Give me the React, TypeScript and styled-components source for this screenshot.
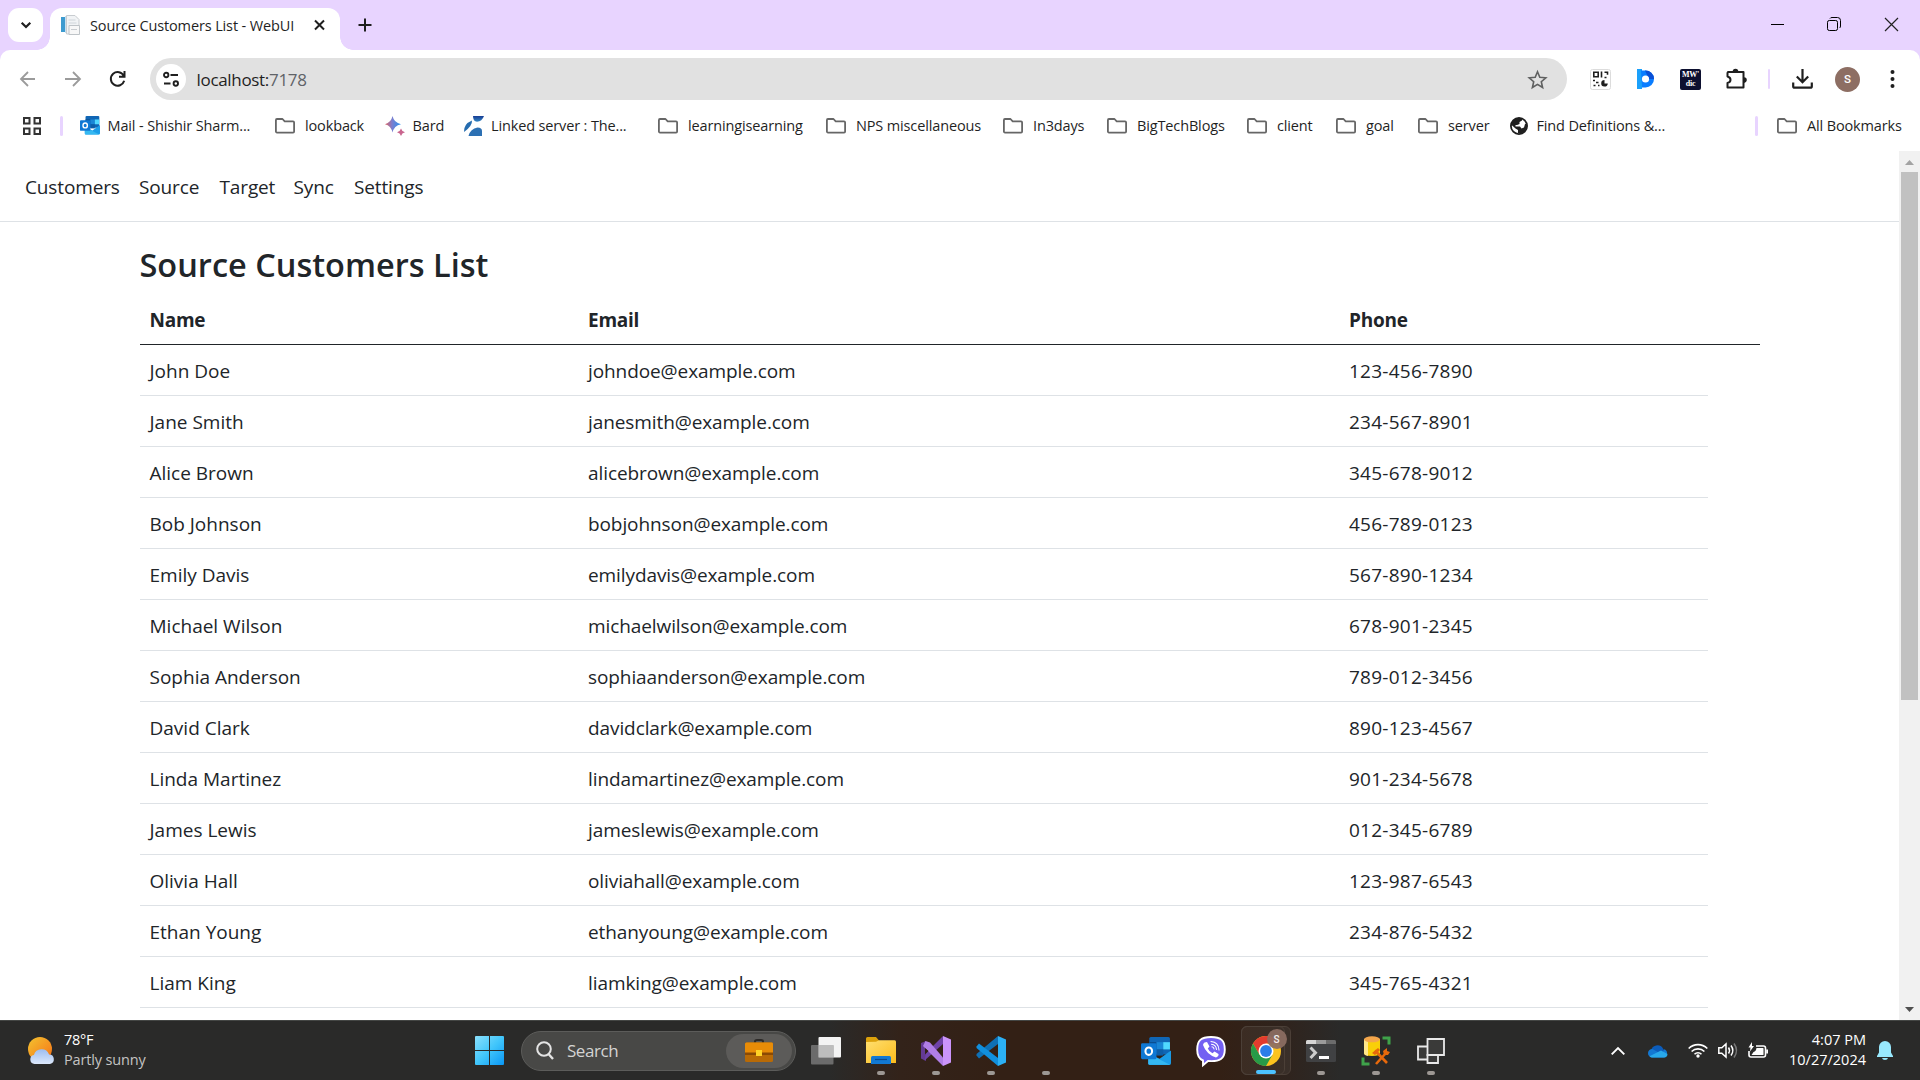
import React from "react";
import styled, { createGlobalStyle, css } from "styled-components";

const GlobalStyle = createGlobalStyle`
  *, *::before, *::after { box-sizing: border-box; }
  html, body { margin: 0; padding: 0; }
  body {
    width: 1920px; height: 1080px; overflow: hidden; background: #fff;
    font-family: "Open Sans", "Noto Sans", sans-serif; color: #212529;
  }
  svg { display: block; flex: none; overflow: visible; }
`;

/* ---------- window frame ---------- */
const Screen = styled.div`
  width: 1920px; height: 1080px; display: flex; flex-direction: column; overflow: hidden;
`;
const TabStrip = styled.div`
  height: 50px; flex: none; background: #e8d4ff; display: flex; align-items: flex-start; padding: 8px 0 0 8px;
`;
const TabSearch = styled.div`
  width: 35px; height: 34px; border-radius: 11px; background: #fff;
  display: flex; align-items: center; justify-content: center;
`;
const Tab = styled.div`
  position: relative; margin-left: 7px; width: 290px; height: 42px; background: #fff;
  border-radius: 12px 12px 0 0; display: flex; align-items: center; padding: 0 13px 8px 10px;
  &::before, &::after {
    content: ""; position: absolute; bottom: 0; width: 13px; height: 13px;
  }
  &::before { left: -13px; background: radial-gradient(circle at 0 0, transparent 12.5px, #fff 13px); }
  &::after { right: -13px; background: radial-gradient(circle at 100% 0, transparent 12.5px, #fff 13px); }
`;
const TabTitle = styled.span`
  margin-left: 10px; flex: 1; font-size: 14.5px; letter-spacing: -0.13px; white-space: nowrap; color: #1f1f1f;
`;
const NewTab = styled.div`
  margin: 10px 0 0 18px; width: 14px;
`;
const WindowButtons = styled.div`
  margin-left: auto; display: flex; padding-top: 9px; height: 34px;
`;
const WindowButton = styled.div<{ $w: number }>`
  width: ${(p) => p.$w}px; display: flex; justify-content: center;
`;
const ToolbarBack = styled.div`
  background: #e8d4ff; flex: none;
`;
const Toolbar = styled.div`
  height: 58px; background: #fff; border-radius: 10px 10px 0 0; display: flex; align-items: center; padding: 0 21px 0 20px;
`;
const NavIcon = styled.div<{ $w: number }>`
  width: ${(p) => p.$w}px; display: flex; align-items: center;
`;
const AddressBar = styled.div`
  width: 1417px; height: 42px; border-radius: 21px; background: #e1e1e1;
  display: flex; align-items: center; padding: 0 20px 0 6px;
`;
const SiteInfo = styled.div`
  width: 30px; height: 30px; border-radius: 50%; background: #fff; display: flex; align-items: center; justify-content: center;
`;
const Url = styled.span`
  margin-left: 10.5px; flex: 1; font-size: 17px; letter-spacing: -0.32px; color: #1f1f1f;
  b { font-weight: 400; color: #5f6368; }
`;
const Extensions = styled.div`
  flex: 1; display: flex; align-items: center; height: 42px; padding-left: 23px;
`;
const Slot = styled.div<{ $w: number }>`
  width: ${(p) => p.$w}px; flex: none; display: flex; align-items: center;
`;
const Dictionary = styled.div`
  width: 21px; height: 21px; border-radius: 2px; background: #0d1030; color: #fff;
  font: 700 8px/9px "Liberation Serif", serif; letter-spacing: -0.3px; text-align: center; padding-top: 1.5px;
`;
const Avatar = styled.div<{ $size: number }>`
  width: ${(p) => p.$size}px; height: ${(p) => p.$size}px; border-radius: 50%; background: #8d6e63; color: #fff;
  font: 500 ${(p) => (p.$size > 22 ? 11.5 : 10)}px Roboto, sans-serif; display: flex; align-items: center; justify-content: center;
`;

/* ---------- bookmarks ---------- */
const BookmarkBar = styled.div`
  height: 43px; flex: none; background: #fff; display: flex; align-items: center; padding: 0 0 8px 23px;
`;
const Divider = styled.div<{ $w?: number }>`
  width: ${(p) => p.$w ?? 3}px; height: 20px; border-radius: 2px; background: #e8d4ff;
`;
const Bookmark = styled.div<{ $w: number; $gap: number }>`
  width: ${(p) => p.$w}px; flex: none; display: flex; align-items: center; gap: ${(p) => p.$gap}px;
  white-space: nowrap; font-size: 14.5px; letter-spacing: -0.14px; color: #1f1f1f;
`;

/* ---------- page ---------- */
const Viewport = styled.div`
  height: 869px; flex: none; display: flex; overflow: hidden;
`;
const Page = styled.main`
  width: 1899px; height: 869px; overflow: hidden; background: #fff;
`;
const SiteNav = styled.nav`
  height: 71px; border-bottom: 1px solid #dee2e6; display: flex; align-items: center; padding: 1px 0 0 25px;
  font-size: 19px; letter-spacing: -0.13px; color: #212529;
`;
const NavLink = styled.a<{ $w: number }>`
  width: ${(p) => p.$w}px; white-space: nowrap;
`;
const Container = styled.div`
  padding: 20px 0 0 140px;
`;
const Title = styled.h1`
  margin: 0 0 0 -0.5px; height: 52px; font-size: 32.5px; line-height: 45px; font-weight: 600; letter-spacing: 0; color: #212529;
`;
const Table = styled.table`
  width: 1620px; table-layout: fixed; border-collapse: separate; border-spacing: 0; font-size: 19px; letter-spacing: -0.09px;
  th, td { height: 51px; padding: 1.5px 10px 0; text-align: left; vertical-align: middle; line-height: 30px; border-bottom: 1px solid #dee2e6; }
  th { border-bottom-color: #212529; font-weight: 700; letter-spacing: -0.25px; }
  th:first-child, td:first-child { padding-left: 9.5px; }
  td:first-child { letter-spacing: 0; }
`;
const PhoneCell = styled.td`
  letter-spacing: 0.26px;
`;
const ScrollTrack = styled.div`
  width: 21px; background: #f1f1f1; display: flex; flex-direction: column; align-items: center; padding: 9px 0 8px;
`;
const ScrollThumb = styled.div`
  margin: 7px 0 auto; width: 17px; height: 528px; background: #c1c1c1;
`;

/* ---------- taskbar ---------- */
const Taskbar = styled.footer`
  height: 60px; flex: none; display: flex; align-items: center; border-top: 1px solid #444644; color: #fff;
  background: linear-gradient(90deg, #2a2a29 0, #2a2a29 830px, #33231a 900px, #332015 1000px, #332015 1220px, #2f241e 1290px, #2a2a29 1340px);
`;
const Weather = styled.div`
  width: 462px; padding-left: 28px; display: flex; align-items: center; gap: 9px;
`;
const Lines = styled.div<{ $right?: boolean }>`
  font-size: 14.5px; line-height: 20px; letter-spacing: -0.25px; white-space: nowrap; padding-bottom: 2px;
  ${(p) => p.$right && css`text-align: right; width: 98px; margin-right: 11px; flex: none; letter-spacing: 0;`}
  span { display: block; }
`;
const Muted = styled.span`
  color: #c4c4c3; letter-spacing: -0.15px;
`;
const SearchBox = styled.div`
  margin: 0 2.5px 0 4px; width: 275px; height: 40px; border-radius: 20px; background: #484846; border: 1px solid #5c5c5a;
  display: flex; align-items: center; padding: 0 3px 0 14px; font-size: 17px; letter-spacing: -0.45px; color: #d4d4d3;
  svg + span { margin-left: 13px; flex: 1; }
`;
const SearchHighlight = styled.div`
  width: 66px; height: 34px; border-radius: 17px; background: #5c5b59; display: flex; align-items: center; justify-content: center;
`;
const AppCell = styled.div<{ $active?: boolean }>`
  position: relative; width: 55px; height: 49px; flex: none; display: flex; align-items: center; justify-content: center;
  ${(p) => p.$active && css`
    &::before, &::after { content: ""; position: absolute; top: 0; left: 2px; width: 50px; height: 49px; border-radius: 6px; border: 1px solid #4b3f37; background: #ffffff0d; }
    &::after { width: 44px; background: none; }
  `}
`;
const Running = styled.i<{ $active?: boolean }>`
  position: absolute; z-index: 1; bottom: ${(p) => (p.$active ? 1 : 0)}px; left: 50%; transform: translateX(-50%);
  width: ${(p) => (p.$active ? 20 : 8)}px; height: 4px; border-radius: 2px; background: ${(p) => (p.$active ? "#4cc2ff" : "#9d9894")};
`;
const IconLayer = styled.div`
  position: relative; z-index: 1;
`;
const Badge = styled.div`
  position: absolute; z-index: 2; top: 3px; left: 28px; opacity: 0.92;
`;
const Tray = styled.div`
  display: flex; align-items: center; margin-left: 152.5px;
`;

/* ---------- icons ---------- */
const ink = "#1f1f1f";

const Folder = () => (
  <svg width="20" height="16" viewBox="0 0 20 16" fill="none" stroke="#666" strokeWidth="1.8" strokeLinejoin="round">
    <path d="M2 1h5.5l2.2 2.3H18a1.1 1.1 0 0 1 1.1 1.1v9a1.2 1.2 0 0 1-1.1 1.2H2A1.1 1.1 0 0 1 .9 13.400V2.200A1.2 1.2 0 0 1 2 1Z" />
  </svg>
);
const OutlookIcon = ({ size }: { size: number }) => (
  <svg width={size} height={size * 0.93} viewBox="0 0 29 27">
    <rect x="8" y="0" width="20" height="17" rx="1.500" fill="#1066b5" />
    <path d="M8 5h7v7H8z" fill="#0a4a8a" />
    <path d="M15 5h6.500v7H15z" fill="#1a86d6" />
    <path d="M21.500 5H28v7h-6.500z" fill="#50d9ff" />
    <path d="M15 12h6.500v6H15z" fill="#0c5da8" />
    <path d="M7 16l11 5 11-8v12.500a1.500 1.500 0 0 1-1.500 1.500h-19A1.500 1.500 0 0 1 7 25.500Z" fill="#1b9de8" />
    <path d="M7 16l21 10.800H8.500A1.500 1.500 0 0 1 7 25.300Z" fill="#35b8f1" />
    <rect x="0" y="6" width="15" height="15.500" rx="1.300" fill="#0f78d4" />
    <ellipse cx="7.500" cy="13.700" rx="3.200" ry="3.600" fill="none" stroke="#fff" strokeWidth="2" />
  </svg>
);
const BardIcon = () => (
  <svg width="20" height="20" viewBox="0 0 20 20">
    <defs>
      <linearGradient id="bard" x1="0" x2="1"><stop offset="0" stopColor="#e0605e" /><stop offset=".45" stopColor="#7a7fd0" /><stop offset="1" stopColor="#2a93ee" /></linearGradient>
    </defs>
    <path d="M7.500 0Q9 6.700 16 8.200 9 9.700 7.500 16.600 6 9.700 0 8.200 6 6.700 7.500 0Z" fill="url(#bard)" />
    <path d="M16 12.500q.8 3 4 3.700-3.200.7-4 3.700-.8-3-4-3.700 3.200-.7 4-3.700Z" fill="#c9658f" />
  </svg>
);
const LinkedIcon = () => (
  <svg width="20" height="20" viewBox="0 0 20 20">
    <defs><linearGradient id="lk" x1="0" y1="0" x2="0" y2="1"><stop offset="0" stopColor="#173c94" /><stop offset="1" stopColor="#3388c4" /></linearGradient></defs>
    <path d="M9 0h11q-2 5.500-7 5.800Q9 5.500 9 0Z" fill="url(#lk)" />
    <path d="M8 4.500Q8.500 10 0 16 -.5 8 8 4.500Z" fill="#256caf" />
    <path d="M4.500 20q2-7.500 9-8.500 4.500.2 4.500 3.500v5Z" fill="#2c70b3" />
  </svg>
);
const GlobeIcon = () => (
  <svg width="18" height="18" viewBox="0 0 18 18">
    <circle cx="9" cy="9" r="8.100" fill="#fff" stroke={ink} strokeWidth="1.800" />
    <path d="M1 7.500Q2 2 7 1l5 0v2.500L9.500 5v2L7 8H5.500v1.500H10l1.500 2 2.500-1 1-3.500h2q.5 7-6 9.500L8 16v-3L5.500 11.500Z" fill={ink} />
  </svg>
);
const WeatherIcon = () => (
  <svg width="27" height="27" viewBox="0 0 27 27">
    <defs>
      <linearGradient id="sun" x1="0" y1="0" x2="1" y2="1"><stop offset="0" stopColor="#f3c330" /><stop offset=".7" stopColor="#f58a1e" /><stop offset="1" stopColor="#ee6010" /></linearGradient>
      <linearGradient id="cl" x1="0" y1="0" x2="0" y2="1"><stop offset="0" stopColor="#9dbdf0" /><stop offset="1" stopColor="#dce8fb" /></linearGradient>
    </defs>
    <circle cx="12" cy="12" r="12" fill="url(#sun)" />
    <path d="M6.500 27a4.500 4.500 0 0 1-.6-8.900 8 8 0 0 1 15.200-.6A4.800 4.800 0 0 1 22 27Z" fill="url(#cl)" />
  </svg>
);
const StartIcon = () => (
  <svg width="29" height="29" viewBox="0 0 29 29">
    <defs><linearGradient id="win" x1="0" y1="0" x2="1" y2="1"><stop offset="0" stopColor="#8be0fc" /><stop offset=".5" stopColor="#41c6fb" /><stop offset="1" stopColor="#0a97f5" /></linearGradient></defs>
    <path d="M1 0h13v14H0V1a1 1 0 0 1 1-1ZM15 0h13a1 1 0 0 1 1 1v13H15ZM0 15h14v14H1a1 1 0 0 1-1-1ZM15 15h14v13a1 1 0 0 1-1 1H15Z" fill="url(#win)" />
  </svg>
);
const Briefcase = () => (
  <svg width="28" height="22" viewBox="0 0 28 22">
    <path d="M10 3V1.500Q10 0 12 0h4q2 0 2 1.500V3" fill="none" stroke="#2c2a28" strokeWidth="2" />
    <rect y="2.500" width="28" height="19.500" rx="1.500" fill="#b86a06" />
    <path d="M1.500 2.500h25A1.500 1.500 0 0 1 28 4v9H0V4a1.500 1.500 0 0 1 1.500-1.500Z" fill="#e88c07" />
    <path d="M0 12.500h28V15H0z" fill="#8b4a04" />
    <rect x="11" y="10" width="6" height="6" fill="#ffd226" />
  </svg>
);
const TaskView = () => (
  <svg width="30" height="28" viewBox="0 0 30 28">
    <rect x="7.500" width="22.500" height="20.500" rx="1" fill="#f3f3f3" />
    <rect y="8" width="22.500" height="19.500" rx="1" fill="#7d7d7d" opacity=".78" />
    <path d="M7.500 8h15v12.500h-15z" fill="#bdbdbd" />
  </svg>
);
const Explorer = () => (
  <svg width="30" height="27" viewBox="0 0 30 27">
    <defs><linearGradient id="fx" x1="0" y1="0" x2="1" y2="1"><stop offset="0" stopColor="#ffdf70" /><stop offset="1" stopColor="#fcbc1c" /></linearGradient></defs>
    <path d="M0 1.500A1.500 1.500 0 0 1 1.500 0H10l3 3.500V8H0Z" fill="#dca10b" />
    <path d="M0 5l10-.3L13 3.300h15.500A1.500 1.500 0 0 1 30 5v21H0Z" fill="url(#fx)" />
    <path d="M5 27v-6.500Q5 19 6.500 19h17q1.500 0 1.500 1.500V27Z" fill="#1279d3" />
    <path d="M9 22.500h12" stroke="#0b4a8e" strokeWidth="1.200" />
  </svg>
);
const VisualStudio = () => (
  <svg width="30" height="30" viewBox="0 0 30 30">
    <path d="M0 7l5-2v20l-5-2.500Z" fill="#643a94" />
    <path d="M3.500 24.500L22 8V0L5 17Z" fill="#6f43a8" />
    <path d="M4.500 5L9 6.500 22 21.500V30L2 10Z" fill="#b07ee6" />
    <path d="M22 0l8 3.500v23L22 30Z" fill="#cb94fb" />
    <path d="M4 12v6.500L7.500 15Z" fill="#332015" />
  </svg>
);
const VSCode = () => (
  <svg width="30" height="30" viewBox="0 0 30 30">
    <path d="M.5 19.500L3 22.500 22 8V0L.5 18Z" fill="#0f70b5" strokeLinejoin="round" />
    <path d="M.5 10.500L3 7.500 22 22v8L.5 12Z" fill="#118fdd" />
    <path d="M22 0l8 3.500v23L22 30Z" fill="#2cb0f4" />
  </svg>
);
const Viber = () => (
  <svg width="30" height="30" viewBox="0 0 30 30">
    <path d="M15 1C5 1 1.200 4.500 1.200 13.500 1.200 20 3 23 7 24.500v4.700l5-4.200c12 1 16.800-2.500 16.800-11.500S25 1 15 1Z" fill="#7360f2" stroke="#fff" strokeWidth="1.900" />
    <path d="M8.500 6.500L11 6l2.500 4.500-1.700 2q1.200 3.200 4.700 4.700l2-1.700 4 2.500q.5 2-2.500 3.500Q10.500 18.500 7 9q0-1.500 1.500-2.500Z" fill="#fff" />
    <path d="M15 5.500q7.500.5 8 8.500M15.500 8.200q4.500.4 5 5.300M16 10.800q1.800.4 2 2.200" fill="none" stroke="#fff" strokeWidth="1.100" strokeLinecap="round" />
  </svg>
);
const Chrome = () => (
  <svg width="30" height="30" viewBox="0 0 30 30">
    <circle cx="15" cy="15" r="15" fill="#fcc31e" />
    <path d="M2 7.500A15 15 0 0 1 28 7.500H15L8.500 18.700Z" fill="#e33b2e" />
    <path d="M2 7.500A15 15 0 0 0 15 30l6.500-11.250H8.500Z" fill="#279b48" />
    <circle cx="15" cy="15" r="7.500" fill="#fff" />
    <circle cx="15" cy="15" r="5.900" fill="#2b7de9" />
  </svg>
);
const Terminal = () => (
  <svg width="30" height="22" viewBox="0 0 30 22">
    <rect width="30" height="22" rx="1.500" fill="#404143" />
    <path d="M1.500 0H10v4H0V1.500A1.500 1.500 0 0 1 1.500 0Z" fill="#d5d5d5" />
    <path d="M10 0h10v4H10z" fill="#9b9b9b" /><path d="M20 0h8.500A1.500 1.500 0 0 1 30 1.500V4H20z" fill="#6c6c6c" />
    <path d="M4.500 7.500l5 5.200-5 5.300" fill="none" stroke="#ccc" strokeWidth="3" />
    <path d="M13 16h10v3H13z" fill="#fff" />
  </svg>
);
const ServerStudio = () => (
  <svg width="30" height="30" viewBox="0 0 30 30">
    <path d="M3 3v14q0 3 8 3t8-3V3Z" fill="#f9cf08" /><path d="M3 3v14q0 2.500 4 2.900V3Z" fill="#ffe78a" />
    <ellipse cx="11" cy="3.300" rx="8" ry="3" fill="#f3a64b" />
    <path d="M21.500 2H28v6.500M2 21.500V28h6.500" fill="none" stroke="#3fa34a" strokeWidth="3" />
    <path d="M15 28l10-11M26 27L14 14.500" stroke="#e8690b" strokeWidth="2.600" />
    <path d="M11 17l6-5 2 2-5 5ZM23 19l-1-4 4-3v3l3 1-2 3Z" fill="#e8690b" />
  </svg>
);
const Boxes = () => (
  <svg width="28" height="26" viewBox="0 0 28 26" fill="#3a3a39" stroke="#e9e9e9" strokeWidth="1.800">
    <path d="M1 8.500h10.500v13H1z" /><path d="M10.500 1H27v16H10.500z" /><path d="M10.500 17H21v8H10.500z" />
  </svg>
);
const CellIcon = ({ children, running }: { children?: React.ReactNode; running?: boolean }) => (
  <AppCell><IconLayer>{children}</IconLayer>{running && <Running />}</AppCell>
);

/* ---------- data ---------- */
type BookmarkItem = { label: string; width: number; gap?: number; icon?: React.ReactNode };
const bookmarks: BookmarkItem[] = [
  { label: "Mail - Shishir Sharm...", width: 195, gap: 7.5, icon: <OutlookIcon size={20} /> },
  { label: "lookback", width: 110 },
  { label: "Bard", width: 79, gap: 7.5, icon: <BardIcon /> },
  { label: "Linked server : The...", width: 194, gap: 7, icon: <LinkedIcon /> },
  { label: "learningisearning", width: 168 },
  { label: "NPS miscellaneous", width: 177 },
  { label: "In3days", width: 104 },
  { label: "BigTechBlogs", width: 140 },
  { label: "client", width: 89 },
  { label: "goal", width: 82 },
  { label: "server", width: 92 },
  { label: "Find Definitions &...", width: 245, gap: 8.5, icon: <GlobeIcon /> },
];
const links: [string, number][] = [["Customers", 114], ["Source", 80.5], ["Target", 74], ["Sync", 60.5], ["Settings", 80]];
const customers = [
  ["John Doe", "johndoe@example.com", "123-456-7890"],
  ["Jane Smith", "janesmith@example.com", "234-567-8901"],
  ["Alice Brown", "alicebrown@example.com", "345-678-9012"],
  ["Bob Johnson", "bobjohnson@example.com", "456-789-0123"],
  ["Emily Davis", "emilydavis@example.com", "567-890-1234"],
  ["Michael Wilson", "michaelwilson@example.com", "678-901-2345"],
  ["Sophia Anderson", "sophiaanderson@example.com", "789-012-3456"],
  ["David Clark", "davidclark@example.com", "890-123-4567"],
  ["Linda Martinez", "lindamartinez@example.com", "901-234-5678"],
  ["James Lewis", "jameslewis@example.com", "012-345-6789"],
  ["Olivia Hall", "oliviahall@example.com", "123-987-6543"],
  ["Ethan Young", "ethanyoung@example.com", "234-876-5432"],
  ["Liam King", "liamking@example.com", "345-765-4321"],
];

const BrowserTabs = () => (
  <TabStrip>
    <TabSearch>
      <svg width="10" height="6" viewBox="0 0 10 6" fill="none" stroke={ink} strokeWidth="2.200"><path d="M.7.7L5 5 9.300.7" /></svg>
    </TabSearch>
    <Tab>
      <svg width="20" height="20" viewBox="0 0 20 20">
        <path d="M1 2h4v15H1z" fill="#3d9bd0" /><path d="M5 1h4v17H5z" fill="#c5dff0" />
        <path d="M6.500.5H15l4 4V19H6.500Z" fill="#f1f3f5" stroke="#c8ccd0" />
        <path d="M8.500 5h7M8.500 8h8M8.500 14h9" stroke="#cfd5da" /><path d="M9 10.500h10.500v9H9z" fill="#f7f7f7" stroke="#bfc4c8" /><path d="M11 14.500h6" stroke="#c8ccd0" />
      </svg>
      <TabTitle>Source Customers List - WebUI</TabTitle>
      <svg width="15" height="10" viewBox="0 0 15 10" fill="none" stroke={ink} strokeWidth="2"><path d="M3 .5l9 9M12 .5l-9 9" /></svg>
    </Tab>
    <NewTab>
      <svg width="14" height="14" viewBox="0 0 14 14" stroke={ink} strokeWidth="2"><path d="M7 .5v13M.5 7h13" /></svg>
    </NewTab>
    <WindowButtons>
      <WindowButton $w={56}><svg width="13" height="14"><path d="M0 7.500h13" stroke="#000" /></svg></WindowButton>
      <WindowButton $w={57}>
        <svg width="14" height="14" viewBox="0 0 14 14" fill="none" stroke="#000">
          <rect x=".5" y="3.500" width="10" height="10" rx="1.800" /><path d="M3 1.500Q3.500.5 5 .5h5.500a3 3 0 0 1 3 3V9q0 1.500-1 2" />
        </svg>
      </WindowButton>
      <WindowButton $w={58}><svg width="13" height="14" viewBox="0 0 13 14" stroke="#222" strokeWidth="1.200"><path d="M0 1l13 13M13 1L0 14" /></svg></WindowButton>
    </WindowButtons>
  </TabStrip>
);

const BrowserToolbar = () => (
  <ToolbarBack>
    <Toolbar>
      <NavIcon $w={45}><svg width="16" height="16" viewBox="0 0 16 16" fill="none" stroke="#9b9b9b" strokeWidth="1.800"><path d="M15 8H1.500M8 1L1 8l7 7" /></svg></NavIcon>
      <NavIcon $w={45}><svg width="16" height="16" viewBox="0 0 16 16" fill="none" stroke="#9b9b9b" strokeWidth="1.800"><path d="M0 8h14.500M8 1l7 7-7 7" /></svg></NavIcon>
      <NavIcon $w={40}>
        <svg width="16" height="16" viewBox="0 0 16 16" fill="none" stroke={ink} strokeWidth="2"><path d="M13.800 5A6.800 6.800 0 1 0 14.200 9.800M14.500 0v5.700H9" /></svg>
      </NavIcon>
      <AddressBar>
        <SiteInfo>
          <svg width="16" height="15" viewBox="0 0 16 15" fill="none" stroke={ink} strokeWidth="1.900"><circle cx="3.200" cy="3" r="2.200" /><path d="M7.500 3h7.500M1 11.500h6.500" /><circle cx="12.800" cy="11.500" r="2.200" /></svg>
        </SiteInfo>
        <Url>localhost:<b>7178</b></Url>
        <svg width="19" height="19" viewBox="0 0 19 19" fill="none" stroke="#5f6060" strokeWidth="1.600"><path d="M9.500 1.800l2.300 5.500 6 .5-4.500 3.900 1.300 5.800-5.100-3.100-5.100 3.100 1.300-5.800L1.200 7.800l6-.5Z" /></svg>
      </AddressBar>
      <Extensions>
        <Slot $w={47}>
          <svg width="21" height="21" viewBox="0 0 21 21"><rect x=".5" y=".5" width="20" height="20" rx="2" fill="#fff" stroke="#dcdcdc" />
            <g fill="none" stroke={ink} strokeWidth="1.600"><path d="M3.800 3.300h4.400v4.400H3.800zM11.500 2.500v6M14.500 3.300h3v2.500M14.500 8.500h2M3 11.500h2M6 13.500h2.500M3.500 16.500h2M8 16.500h1.500" /></g>
            <path d="M14.500 11a3.300 3.300 0 1 0 3.300 3.500h-3.300Z" fill={ink} /></svg>
        </Slot>
        <Slot $w={43}>
          <svg width="18" height="20" viewBox="0 0 18 20"><path d="M0 0h5v20H0z" fill="#1aa0fb" /><path d="M4 1.500h4.500a8.500 8.500 0 0 1 0 17H5Z" fill="#0a7dff" /><path d="M8 1.500A8.500 8.500 0 0 1 17 10h-5Z" fill="#0a4fd6" /><circle cx="8.500" cy="10" r="3.600" fill="#fff" /></svg>
        </Slot>
        <Slot $w={46}><Dictionary>MW'<br />dic</Dictionary></Slot>
        <Slot $w={42}>
          <svg width="21" height="21" viewBox="0 0 21 21" fill="none" stroke={ink} strokeWidth="2" strokeLinejoin="round"><path d="M2 3h15.500v15.500H1.500V14q3-.8 3-3.200T1.500 7.500V4Z" /><path d="M7.700 2.500a1.800 1.800 0 0 1 3.600 0M18 9.300a1.800 1.800 0 0 1 0 3.600" fill={ink} /></svg>
        </Slot>
        <Slot $w={24}><Divider $w={2} /></Slot>
        <Slot $w={43}>
          <svg width="21" height="20" viewBox="0 0 21 20" fill="none" stroke={ink} strokeWidth="2.200"><path d="M10.500 0v12.500M4.800 7.500l5.700 5.700 5.700-5.700M1.200 13.500v4a1.200 1.200 0 0 0 1.200 1.200h16.200a1.200 1.200 0 0 0 1.200-1.200v-4" /></svg>
        </Slot>
        <Slot $w={55}><Avatar $size={25}>S</Avatar></Slot>
        <svg width="5" height="18" viewBox="0 0 5 18" fill={ink}><circle cx="2.500" cy="2" r="2" /><circle cx="2.500" cy="9" r="2" /><circle cx="2.500" cy="16" r="2" /></svg>
      </Extensions>
    </Toolbar>
  </ToolbarBack>
);

const Bookmarks = () => (
  <BookmarkBar>
    <Slot $w={37}>
      <svg width="18" height="18" viewBox="0 0 18 18" fill="none" stroke="#333" strokeWidth="2"><path d="M1 1h5.500v5.500H1zM11.500 1H17v5.500h-5.500zM1 11.500h5.500V17H1zM11.500 11.500H17V17h-5.500z" /></svg>
    </Slot>
    <Slot $w={20}><Divider /></Slot>
    {bookmarks.map((b) => (
      <Bookmark key={b.label} $w={b.width} $gap={b.gap ?? 10}>{b.icon ?? <Folder />}{b.label}</Bookmark>
    ))}
    <Slot $w={22}><Divider /></Slot>
    <Bookmark $w={130} $gap={10}><Folder />All Bookmarks</Bookmark>
  </BookmarkBar>
);

const WindowsTaskbar = () => (
  <Taskbar>
    <Weather><WeatherIcon /><Lines><span>78°F</span><Muted>Partly sunny</Muted></Lines></Weather>
    <CellIcon><StartIcon /></CellIcon>
    <SearchBox>
      <svg width="18" height="19" viewBox="0 0 18 19" fill="none" stroke="#e4e4e4" strokeWidth="2"><circle cx="8" cy="8" r="6.800" /><path d="M12.500 13l4.500 5" strokeWidth="2.400" /></svg>
      <span>Search</span>
      <SearchHighlight><Briefcase /></SearchHighlight>
    </SearchBox>
    <CellIcon><TaskView /></CellIcon>
    <CellIcon running><Explorer /></CellIcon>
    <CellIcon running><VisualStudio /></CellIcon>
    <CellIcon running><VSCode /></CellIcon>
    <CellIcon running />
    <CellIcon />
    <CellIcon><OutlookIcon size={30} /></CellIcon>
    <CellIcon><Viber /></CellIcon>
    <AppCell $active><IconLayer><Chrome /></IconLayer><Badge><Avatar $size={20}>S</Avatar></Badge><Running $active /></AppCell>
    <CellIcon running><Terminal /></CellIcon>
    <CellIcon running><ServerStudio /></CellIcon>
    <CellIcon running><Boxes /></CellIcon>
    <Tray>
      <Slot $w={37}><svg width="14" height="8" viewBox="0 0 14 8" fill="none" stroke="#fff" strokeWidth="1.900"><path d="M.7 7.300L7 1l6.300 6.300" /></svg></Slot>
      <Slot $w={40}>
        <svg width="20" height="14" viewBox="0 0 20 14"><path d="M3 7a6.500 6.500 0 0 1 12-2.500L17 8 4 12Z" fill="#0c5cba" /><path d="M4 13.500A4.200 4.200 0 0 1 4.500 5L14 10.500 16 5.300a4.300 4.300 0 0 1 .2 8.200Z" fill="#1378d2" /><path d="M1.500 12.200L13 6.500l6.500 3.500a3.600 3.600 0 0 1-3.300 3.500H4q-1.500 0-2.500-1.300Z" fill="#28a8ea" /></svg>
      </Slot>
      <Slot $w={30}>
        <svg width="20" height="15" viewBox="0 0 20 15" fill="none" stroke="#fff" strokeWidth="1.600"><path d="M.7 5.500a13.200 13.200 0 0 1 18.600 0M3.600 8.500a9 9 0 0 1 12.800 0M6.500 11.300a5 5 0 0 1 7 0" /><circle cx="10" cy="13" r="1.700" fill="#fff" stroke="none" /></svg>
      </Slot>
      <Slot $w={30}>
        <svg width="20" height="17" viewBox="0 0 20 17" fill="none" stroke="#fff" strokeWidth="1.500"><path d="M.8 5.800h3L8 2v13l-4.200-3.800h-3ZM10.500 5.500q2 3 0 6M13 3.500q3.700 5 0 10" /><path d="M16 1.500q5 7 0 14" stroke="#777" /></svg>
      </Slot>
      <Slot $w={20}>
        <svg width="20" height="17" viewBox="0 0 20 17"><path d="M8 4h7.500Q17.500 4 17.500 6v7q0 2-2 2H3q-2 0-2-2V9" fill="none" stroke="#fff" strokeWidth="1.600" /><path d="M8.500 6H15q.5 0 .5.500v6q0 .5-.5.500H3.500l2-3Q8 9.500 8.500 6ZM18.200 7.500H20v4h-1.800ZM4 0L.5 5.500h2L2 9.500l4-5.500H4Z" fill="#fff" /></svg>
      </Slot>
      <Lines $right><span>4:07 PM</span><span>10/27/2024</span></Lines>
      <svg width="16" height="19" viewBox="0 0 16 19" fill="#98e8fd"><path d="M8 0a6 6 0 0 0-6 6v5.500L0 15v1h16v-1l-2-3.500V6a6 6 0 0 0-6-6ZM5 17h6q-.5 2-3 2t-3-2Z" /></svg>
    </Tray>
  </Taskbar>
);

export default function App() {
  return (
    <Screen>
      <GlobalStyle />
      <BrowserTabs />
      <BrowserToolbar />
      <Bookmarks />
      <Viewport>
        <Page>
          <SiteNav>{links.map(([label, w]) => <NavLink key={label} $w={w}>{label}</NavLink>)}</SiteNav>
          <Container>
            <Title>Source Customers List</Title>
            <Table>
              <colgroup><col width="438" /><col width="761" /><col width="369" /><col width="52" /></colgroup>
              <thead><tr><th>Name</th><th>Email</th><th>Phone</th><th /></tr></thead>
              <tbody>
                {customers.map(([name, email, phone]) => (
                  <tr key={email}><td>{name}</td><td>{email}</td><PhoneCell>{phone}</PhoneCell></tr>
                ))}
              </tbody>
            </Table>
          </Container>
        </Page>
        <ScrollTrack>
          <svg width="9" height="5"><path d="M0 5L4.500 0 9 5Z" fill="#a3a3a3" /></svg>
          <ScrollThumb />
          <svg width="9" height="5"><path d="M0 0h9L4.500 5Z" fill="#505050" /></svg>
        </ScrollTrack>
      </Viewport>
      <WindowsTaskbar />
    </Screen>
  );
}
